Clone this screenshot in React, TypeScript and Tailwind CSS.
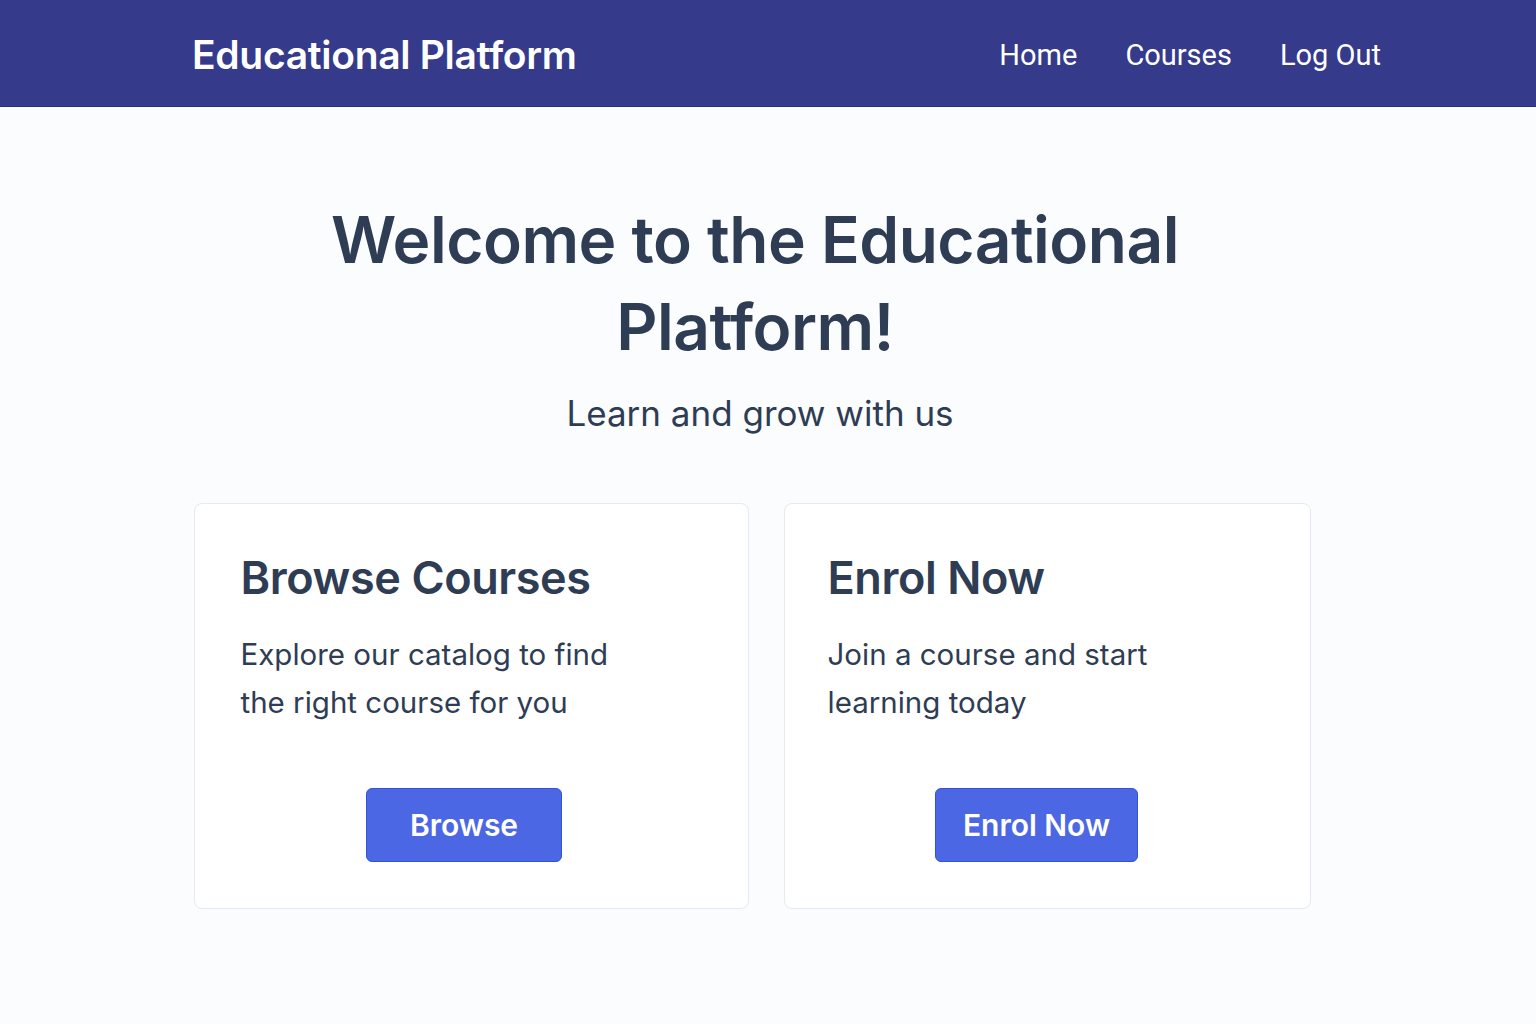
const cards = [
  {
    title: "Browse Courses",
    text: "Explore our catalog to find the right course for you",
    action: "Browse",
    width: "w-[555px] pl-[46px]",
    btn: "w-[196px] -ml-[14px]",
  },
  {
    title: "Enrol Now",
    text: "Join a course and start learning today",
    action: "Enrol Now",
    width: "w-[527px] pl-[43px]",
    btn: "w-[203px] -ml-[18px]",
  },
];

export default function App() {
  return (
    <div className="min-h-screen bg-[#fbfcfe] font-['Inter',sans-serif] text-[#2e3d54]">
      <header className="h-[107px] bg-[#353a8a] border-b border-[#2c3076]">
        <div className="flex h-full items-center justify-between pl-[192px] pr-[155px] pt-[4px]">
          <h1 className="text-[39px] font-semibold tracking-[-0.3px] text-white">
            Educational Platform
          </h1>
          <nav className="flex items-center gap-[48px] pt-[2px] font-['Roboto',sans-serif] text-[29px] text-white">
            <a href="#">Home</a>
            <a href="#">Courses</a>
            <a href="#">Log Out</a>
          </nav>
        </div>
      </header>

      <main className="flex flex-col items-center pt-[89px] pr-[16px]">
        <h2 className="mr-[10px] w-[920px] text-center text-[64px] font-semibold leading-[87px] tracking-[-0.5px]">
          Welcome to the Educational Platform!
        </h2>
        <p className="mt-[21px] text-[35px] leading-[44px]">Learn and grow with us</p>

        <div className="mt-[68px] flex gap-[35px] pr-[16px]">
          {cards.map((card) => (
            <div
              key={card.title}
              className={`${card.width} h-[406px] rounded-lg border border-[#e6e9ef] bg-white pr-[46px] pt-[46px]`}
            >
              <h3 className="text-[45px] font-semibold leading-[56px] tracking-[-0.4px]">
                {card.title}
              </h3>
              <p className="mt-[24px] max-w-[395px] text-[29.5px] leading-[48px]">{card.text}</p>
              <div className="mt-[62px] flex justify-center">
                <button
                  className={`${card.btn} h-[74px] rounded-md border border-[#3551dc] bg-[#4b67e3] text-[30px] font-semibold text-white`}
                >
                  {card.action}
                </button>
              </div>
            </div>
          ))}
        </div>
      </main>
    </div>
  );
}
